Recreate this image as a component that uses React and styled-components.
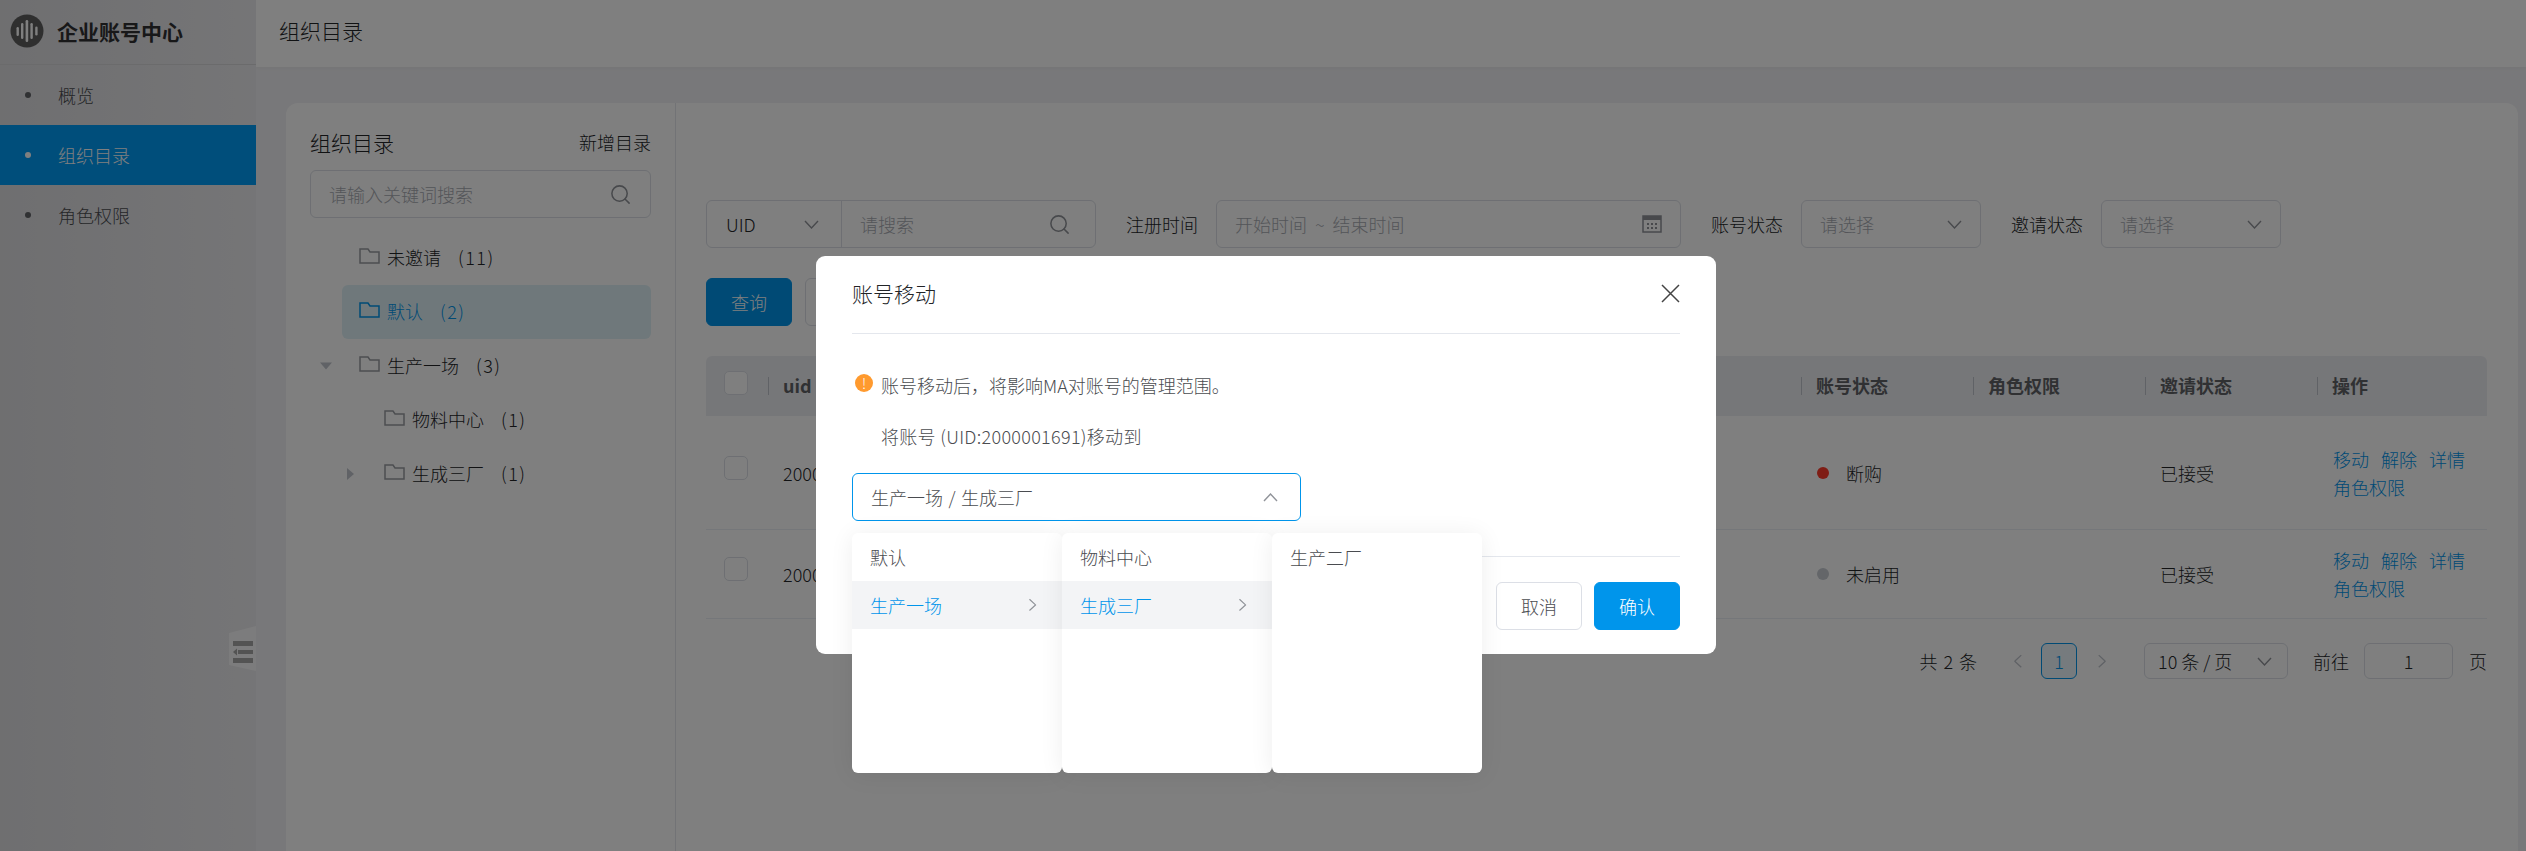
import React from "react";
import styled, { createGlobalStyle } from "styled-components";
import { Search as SearchIcon } from "lucide-react";

const PRIMARY = "#0095eb";

const GlobalStyle = createGlobalStyle`
  html, body {
    margin: 0;
    height: 100%;
    overflow: hidden;
  }
  body {
    font-family: "Noto Sans CJK SC", "Noto Sans", sans-serif;
    font-size: 18px;
    font-weight: 300;
    color: #222427;
    background: #f1f1f4;
  }
  * {
    box-sizing: border-box;
  }
`;

const tree = [
  { name: "未邀请", count: 11, level: 0 },
  { name: "默认", count: 2, level: 0, selected: true },
  { name: "生产一场", count: 3, level: 0, caret: "down" },
  { name: "物料中心", count: 1, level: 1 },
  { name: "生成三厂", count: 1, level: 1, caret: "right" },
];

const rows = [
  { uid: "2000001691", status: "断购", dot: "#ff3a2a", height: 114 },
  { uid: "2000001692", status: "未启用", dot: "#c8ccd3", height: 89 },
];

const Chevron = ({ dir = "down", w = 15 }) => (
  <ChevronSvg $dir={dir} width={w} height={w * 0.6} viewBox="0 0 15 9">
    <path d="M1 1 L7.5 8 L14 1" fill="none" stroke="currentColor" strokeWidth="1.4" />
  </ChevronSvg>
);

const Folder = ({ selected }) => (
  <FolderSvg $selected={selected} viewBox="0 0 21 16" width="21" height="16">
    <path
      d="M1 1 H9 L11 4 H20 V15 H1 Z"
      fill="none"
      stroke="currentColor"
      strokeWidth="1.5"
    />
  </FolderSvg>
);

const App = () => {
  return (
    <>
      <GlobalStyle />
      <Shell>
        <Sidebar>
          <Brand>
            <svg width="34" height="34" viewBox="0 0 34 34">
              <circle cx="17" cy="17" r="16.5" fill="#5f5f5f" />
              <g fill="#fff">
                <rect x="6.5" y="13" width="2.4" height="9" rx="1.2" />
                <rect x="11" y="9" width="2.4" height="16" rx="1.2" />
                <rect x="15.6" y="6" width="2.6" height="22" rx="1.3" />
                <rect x="20.4" y="9" width="2.4" height="16" rx="1.2" />
                <rect x="25.2" y="12.5" width="2.4" height="9" rx="1.2" />
              </g>
            </svg>
            <BrandName>企业账号中心</BrandName>
          </Brand>
          <NavItem>概览</NavItem>
          <NavItem $active>组织目录</NavItem>
          <NavItem>角色权限</NavItem>
          <CollapseHandle width="27" height="45" viewBox="0 0 27 45">
            <path d="M27 0 L0 7 V39 L27 45 Z" fill="#fff" fillOpacity="0.7" />
            <g fill="#a6a6a6">
              <rect x="4" y="15" width="20" height="5" />
              <rect x="9" y="24" width="15" height="4" />
              <path d="M4 26 L8 22.5 V29.5 Z" />
              <rect x="4" y="32" width="20" height="5" />
            </g>
          </CollapseHandle>
        </Sidebar>

        <Main>
          <TopBar>组织目录</TopBar>
          <Content>
            <Card>
              <TreePanel>
                <TreeHead>
                  <TreeTitle>组织目录</TreeTitle>
                  <TreeAction>新增目录</TreeAction>
                </TreeHead>
                <Field $width="100%">
                  <Placeholder>请输入关键词搜索</Placeholder>
                  <SearchIcon size={23} strokeWidth={1.6} color="#909399" />
                </Field>
                <TreeList>
                  {tree.map((node) => (
                    <TreeRow key={node.name} $level={node.level} $selected={node.selected}>
                      {node.caret && <Caret $dir={node.caret} />}
                      <Folder selected={node.selected} />
                      <TreeName>{node.name}</TreeName>
                      <TreeCount>({node.count})</TreeCount>
                    </TreeRow>
                  ))}
                </TreeList>
              </TreePanel>

              <ListPanel>
                <Filters>
                  <SearchGroup>
                    <UidSelect>
                      UID
                      <IconTone>
                        <Chevron />
                      </IconTone>
                    </UidSelect>
                    <UidInput>
                      <Placeholder>请搜索</Placeholder>
                      <SearchIcon size={23} strokeWidth={1.6} color="#909399" />
                    </UidInput>
                  </SearchGroup>
                  <FilterLabel>注册时间</FilterLabel>
                  <Field $width="465px">
                    <RangeText>开始时间 ~ 结束时间</RangeText>
                    <svg width="20" height="18" viewBox="0 0 20 18">
                      <rect x="1" y="1" width="18" height="16" fill="none" stroke="#909399" strokeWidth="1.5" />
                      <rect x="1" y="1" width="18" height="4" fill="#909399" />
                      <g fill="#909399">
                        <rect x="5" y="8" width="2" height="2" />
                        <rect x="9" y="8" width="2" height="2" />
                        <rect x="13" y="8" width="2" height="2" />
                        <rect x="5" y="12" width="2" height="2" />
                        <rect x="9" y="12" width="2" height="2" />
                        <rect x="13" y="12" width="2" height="2" />
                      </g>
                    </svg>
                  </Field>
                  <FilterLabel>账号状态</FilterLabel>
                  <Field $width="180px">
                    <Placeholder>请选择</Placeholder>
                    <IconTone>
                      <Chevron />
                    </IconTone>
                  </Field>
                  <FilterLabel>邀请状态</FilterLabel>
                  <Field $width="180px">
                    <Placeholder>请选择</Placeholder>
                    <IconTone>
                      <Chevron />
                    </IconTone>
                  </Field>
                </Filters>

                <Actions>
                  <Button $primary>查询</Button>
                  <Button>重置</Button>
                </Actions>

                <Table>
                  <HeadRow>
                    <CheckCell>
                      <Checkbox />
                    </CheckCell>
                    <HeadCell>uid</HeadCell>
                    <HeadCell>账号状态</HeadCell>
                    <HeadCell>角色权限</HeadCell>
                    <HeadCell>邀请状态</HeadCell>
                    <HeadCell>操作</HeadCell>
                  </HeadRow>
                  {rows.map((row) => (
                    <BodyRow key={row.uid} $height={row.height}>
                      <CheckCell $offset>
                        <Checkbox />
                      </CheckCell>
                      <BodyCell>{row.uid}</BodyCell>
                      <BodyCell>
                        <Dot $color={row.dot} />
                        {row.status}
                      </BodyCell>
                      <BodyCell />
                      <BodyCell>已接受</BodyCell>
                      <OpCell>
                        <OpLink>移动</OpLink>
                        <OpLink>解除</OpLink>
                        <OpLink>详情</OpLink>
                        <OpLink>角色权限</OpLink>
                      </OpCell>
                    </BodyRow>
                  ))}
                </Table>

                <Pagination>
                  <Total>共 2 条</Total>
                  <PagerArrow $margin="0 16px 0 34px">
                    <Chevron dir="left" w={14} />
                  </PagerArrow>
                  <PageNum>1</PageNum>
                  <PagerArrow $margin="0 35px 0 18px">
                    <Chevron dir="right" w={14} />
                  </PagerArrow>
                  <SizeSelect>
                    10 条 / 页
                    <IconTone>
                      <Chevron />
                    </IconTone>
                  </SizeSelect>
                  <GotoLabel>前往</GotoLabel>
                  <GotoInput>1</GotoInput>
                  <GotoUnit>页</GotoUnit>
                </Pagination>
              </ListPanel>
            </Card>
          </Content>
        </Main>

        <Mask>
          <Dialog>
            <DialogHead>
              <DialogTitle>账号移动</DialogTitle>
              <svg width="19" height="19" viewBox="0 0 19 19">
                <path d="M1 1 L18 18 M18 1 L1 18" stroke="#444" strokeWidth="1.5" fill="none" />
              </svg>
            </DialogHead>
            <DialogBody>
              <Notice>
                <WarnIcon>!</WarnIcon>
                账号移动后，将影响MA对账号的管理范围。
              </Notice>
              <MoveText>将账号 (UID:2000001691)移动到</MoveText>
              <CascadeInput>
                生产一场 / 生成三厂
                <IconTone>
                  <Chevron dir="up" />
                </IconTone>
              </CascadeInput>
            </DialogBody>
            <DialogFoot>
              <Button>取消</Button>
              <Button $primary>确认</Button>
            </DialogFoot>

            <Cascader>
              <CascadeMenu>
                <CascadeItem>默认</CascadeItem>
                <CascadeItem $active>
                  生产一场
                  <Chevron dir="right" w={13} />
                </CascadeItem>
              </CascadeMenu>
              <CascadeMenu>
                <CascadeItem>物料中心</CascadeItem>
                <CascadeItem $active>
                  生成三厂
                  <Chevron dir="right" w={13} />
                </CascadeItem>
              </CascadeMenu>
              <CascadeMenu>
                <CascadeItem>生产二厂</CascadeItem>
              </CascadeMenu>
            </Cascader>
          </Dialog>
        </Mask>
      </Shell>
    </>
  );
};

const Shell = styled.div`
  display: flex;
  width: 100%;
  height: 100vh;
  position: relative;
  overflow: hidden;
`;

const Sidebar = styled.aside`
  width: 256px;
  flex: none;
  position: relative;
  background: linear-gradient(90deg, #dedee1, #ebebee);
`;

const Brand = styled.div`
  display: flex;
  align-items: center;
  gap: 13px;
  height: 65px;
  padding: 0 0 2px 10px;
  border-bottom: 1px solid #d6d6d8;
`;

const BrandName = styled.span`
  font-size: 21px;
  font-weight: 700;
  color: #303133;
`;

const NavItem = styled.div`
  display: flex;
  align-items: center;
  height: 60px;
  padding-left: 58px;
  position: relative;
  color: ${(p) => (p.$active ? "#fff" : "#4a4c50")};
  background: ${(p) => (p.$active ? "#009cf7" : "transparent")};

  &::before {
    content: "";
    position: absolute;
    left: 25px;
    top: 27px;
    width: 6px;
    height: 6px;
    border-radius: 50%;
    background: ${(p) => (p.$active ? "#fff" : "#606266")};
  }
`;

const CollapseHandle = styled.svg`
  position: absolute;
  right: 0;
  top: 626px;
`;

const Main = styled.main`
  flex: 1;
  min-width: 0;
  display: flex;
  flex-direction: column;
`;

const TopBar = styled.header`
  height: 67px;
  flex: none;
  display: flex;
  align-items: center;
  padding: 0 0 8px 23px;
  background: #fff;
  font-size: 21px;
  box-shadow: 0 1px 4px rgba(0, 0, 0, 0.04);
`;

const Content = styled.div`
  flex: 1;
  min-height: 0;
  padding: 36px 8px 0 30px;
`;

const Card = styled.section`
  display: flex;
  height: 100%;
  background: #fff;
  border-radius: 12px 12px 0 0;
`;

const TreePanel = styled.div`
  width: 390px;
  flex: none;
  padding: 22px 24px 0 24px;
  border-right: 1px solid #e4e7ed;
`;

const TreeHead = styled.div`
  display: flex;
  justify-content: space-between;
  align-items: center;
  height: 45px;
  padding-bottom: 12px;
`;

const TreeTitle = styled.span`
  font-size: 21px;
`;

const TreeAction = styled.span`
  font-size: 18px;
`;

const Field = styled.div`
  display: flex;
  align-items: center;
  justify-content: space-between;
  width: ${(p) => p.$width};
  height: 48px;
  flex: none;
  padding: 0 18px;
  background: #fff;
  border: 1px solid #dcdfe6;
  border-radius: 6px;
`;

const Placeholder = styled.span`
  color: #a8abb2;
`;

const RangeText = styled(Placeholder)`
  word-spacing: 4px;
`;

const TreeList = styled.div`
  margin-top: 13px;
`;

const TreeRow = styled.div`
  display: flex;
  align-items: center;
  position: relative;
  height: 54px;
  margin-left: 32px;
  padding-left: ${(p) => 17 + p.$level * 25}px;
  padding-bottom: 3px;
  border-radius: 6px;
  color: ${(p) => (p.$selected ? PRIMARY : "inherit")};
  background: ${(p) => (p.$selected ? "#dff1f7" : "transparent")};
`;

const FolderSvg = styled.svg`
  flex: none;
  margin-right: 7px;
  margin-top: -2px;
  color: ${(p) => (p.$selected ? PRIMARY : "#9a9da3")};
`;

const TreeName = styled.span``;

const TreeCount = styled.span`
  margin-left: 17px;
  letter-spacing: 1.5px;
`;

const Caret = styled.i`
  position: absolute;
  top: 50%;
  left: ${(p) => (p.$dir === "down" ? -22 : 5)}px;
  width: 0;
  height: 0;
  transform: translateY(-50%);
  border-style: solid;
  border-color: transparent;
  ${(p) =>
    p.$dir === "down"
      ? "border-width: 7px 6px 0 6px; border-top-color: #c0c4cc;"
      : "border-width: 6px 0 6px 7px; border-left-color: #c0c4cc;"}
`;

const ListPanel = styled.div`
  flex: 1;
  min-width: 0;
  padding: 97px 31px 0 30px;
`;

const Filters = styled.div`
  display: flex;
  align-items: center;
`;

const SearchGroup = styled.div`
  display: flex;
  width: 390px;
  height: 48px;
  flex: none;
  border: 1px solid #dcdfe6;
  border-radius: 6px;
`;

const UidSelect = styled.div`
  display: flex;
  align-items: center;
  justify-content: space-between;
  width: 135px;
  padding: 0 22px 0 19px;
  border-right: 1px solid #dcdfe6;
`;

const UidInput = styled.div`
  flex: 1;
  display: flex;
  align-items: center;
  justify-content: space-between;
  padding: 0 24px 0 18px;
`;

const IconTone = styled.span`
  display: inline-flex;
  color: #909399;
`;

const ChevronSvg = styled.svg`
  flex: none;
  transform: rotate(
    ${(p) => ({ down: 0, up: 180, left: 90, right: -90 })[p.$dir]}deg
  );
`;

const FilterLabel = styled.span`
  margin: 0 18px 0 30px;
  flex: none;
`;

const Actions = styled.div`
  display: flex;
  gap: 13px;
  margin-top: 30px;
`;

const Button = styled.button`
  width: 86px;
  height: 48px;
  padding: 0;
  font: inherit;
  border-radius: 6px;
  color: ${(p) => (p.$primary ? "#fff" : "#4a4c50")};
  background: ${(p) => (p.$primary ? PRIMARY : "#fff")};
  border: 1px solid ${(p) => (p.$primary ? PRIMARY : "#dcdfe6")};
`;

const COLUMNS = "62px 1fr 172px 172px 172px 170px";

const Table = styled.div`
  margin-top: 30px;
`;

const HeadRow = styled.div`
  display: grid;
  grid-template-columns: ${COLUMNS};
  height: 60px;
  background: #edeff3;
  border-radius: 6px 6px 0 0;
`;

const HeadCell = styled.div`
  display: flex;
  align-items: center;
  font-weight: 700;
  color: #606266;
  position: relative;
  padding: 0 0 3px 15px;

  &::before {
    content: "";
    position: absolute;
    left: 0;
    top: 21px;
    height: 18px;
    width: 1px;
    background: #c0c4cc;
  }
`;

const CheckCell = styled.div`
  display: flex;
  align-items: center;
  padding: ${(p) => (p.$offset ? "0 0 10px 18px" : "0 0 6px 18px")};
`;

const Checkbox = styled.span`
  display: block;
  width: 24px;
  height: 24px;
  background: #fff;
  border: 1px solid #dcdfe6;
  border-radius: 5px;
`;

const BodyRow = styled.div`
  display: grid;
  grid-template-columns: ${COLUMNS};
  height: ${(p) => p.$height}px;
  border-bottom: 1px solid #ebeef5;
`;

const BodyCell = styled.div`
  display: flex;
  align-items: center;
  padding-left: 15px;
`;

const Dot = styled.i`
  width: 12px;
  height: 12px;
  margin: 0 17px 0 1px;
  border-radius: 50%;
  background: ${(p) => p.$color};
`;

const OpCell = styled.div`
  display: flex;
  flex-wrap: wrap;
  align-content: center;
  column-gap: 12px;
  row-gap: 2px;
  padding-left: 16px;
  line-height: 26px;
`;

const OpLink = styled.a`
  color: ${PRIMARY};
`;

const Pagination = styled.div`
  display: flex;
  align-items: center;
  justify-content: flex-end;
  height: 36px;
  margin-top: 24px;
`;

const Total = styled.span`
  word-spacing: 2px;
`;

const PagerArrow = styled.span`
  display: inline-flex;
  margin: ${(p) => p.$margin};
  color: #c0c4cc;
`;

const PageNum = styled.span`
  display: flex;
  align-items: center;
  justify-content: center;
  width: 36px;
  height: 36px;
  color: ${PRIMARY};
  background: #edf6fd;
  border: 1px solid ${PRIMARY};
  border-radius: 6px;
`;

const SizeSelect = styled.div`
  display: flex;
  align-items: center;
  justify-content: space-between;
  width: 144px;
  height: 36px;
  padding: 0 15px 0 13px;
  border: 1px solid #dcdfe6;
  border-radius: 6px;
`;

const GotoLabel = styled.span`
  margin: 0 15px 0 25px;
`;

const GotoInput = styled.div`
  display: flex;
  align-items: center;
  justify-content: center;
  width: 89px;
  height: 36px;
  border: 1px solid #dcdfe6;
  border-radius: 6px;
`;

const GotoUnit = styled.span`
  margin-left: 16px;
`;

const Mask = styled.div`
  position: absolute;
  inset: 0;
  background: rgba(0, 0, 0, 0.5);
`;

const Dialog = styled.div`
  position: absolute;
  left: 816px;
  top: 256px;
  width: 900px;
  height: 398px;
  padding: 0 36px;
  display: flex;
  flex-direction: column;
  background: #fff;
  border-radius: 9px;
`;

const DialogHead = styled.div`
  display: flex;
  align-items: center;
  justify-content: space-between;
  height: 78px;
  flex: none;
  border-bottom: 1px solid #e4e7ed;

  svg {
    margin-top: -3px;
  }
`;

const DialogTitle = styled.h3`
  margin: -3px 0 0;
  font-size: 21px;
  font-weight: 300;
  color: #222427;
`;

const DialogBody = styled.div`
  flex: 1;
  color: #4a4c50;
  padding-top: 36px;
  border-bottom: 1px solid #e4e7ed;
`;

const Notice = styled.div`
  display: flex;
  align-items: center;
  height: 30px;
  padding-left: 3px;
  gap: 8px;
`;

const WarnIcon = styled.i`
  display: flex;
  align-items: center;
  justify-content: center;
  width: 18px;
  height: 18px;
  margin-top: -4px;
  border-radius: 50%;
  font-size: 14px;
  line-height: 1;
  font-style: normal;
  color: #fff;
  background: #ff9a2e;
`;

const MoveText = styled.div`
  height: 30px;
  line-height: 30px;
  margin-top: 21px;
  padding-left: 29px;
  letter-spacing: 0.3px;
`;

const CascadeInput = styled.div`
  display: flex;
  align-items: center;
  justify-content: space-between;
  width: 449px;
  height: 48px;
  margin-top: 22px;
  padding: 0 22px 0 18px;
  border: 1px solid ${PRIMARY};
  border-radius: 6px;
  word-spacing: 1.5px;
`;

const DialogFoot = styled.div`
  display: flex;
  justify-content: flex-end;
  gap: 12px;
  height: 97px;
  flex: none;
  padding-top: 25px;
`;

const Cascader = styled.div`
  position: absolute;
  left: 36px;
  top: 277px;
  display: flex;
`;

const CascadeMenu = styled.div`
  width: 210px;
  height: 240px;
  background: #fff;
  border-radius: 6px;
  overflow: hidden;
  box-shadow: 0 2px 24px rgba(0, 0, 0, 0.07);
`;

const CascadeItem = styled.div`
  display: flex;
  align-items: center;
  justify-content: space-between;
  height: 48px;
  padding: 0 23px 0 18px;
  color: ${(p) => (p.$active ? PRIMARY : "#4a4c50")};
  background: ${(p) => (p.$active ? "#f3f4f6" : "transparent")};

  svg {
    color: #909399;
  }
`;

export default App;
